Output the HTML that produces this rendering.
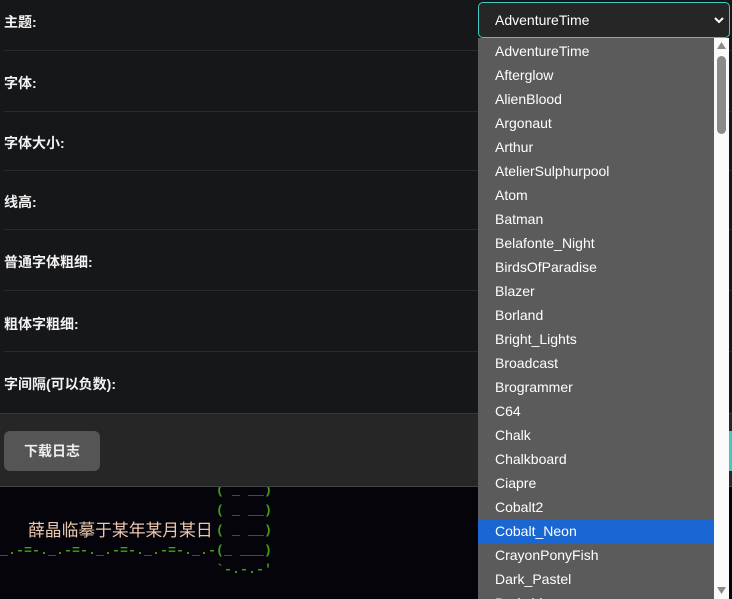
<!DOCTYPE html>
<html><head><meta charset="utf-8"><style>
*{margin:0;padding:0;box-sizing:border-box}
body{width:732px;height:599px;overflow:hidden;background:#161719;font-family:"Liberation Sans","Noto Sans CJK SC",sans-serif;position:relative}
.row{position:absolute;left:4px;width:728px;border-bottom:1px solid #2a2b2d;color:#f2f2f2;font-weight:bold;font-size:14px}
.row span{position:absolute;left:0}
.panel{position:absolute;left:0;top:413px;width:732px;height:74px;background:#262626;border-top:1px solid #3a3a3a;border-bottom:1px solid #444}
.btn{position:absolute;left:4px;top:17px;width:96px;height:40px;background:#555;border-radius:6px;color:#eee;font-weight:bold;font-size:14px;text-align:center;line-height:40px}
.term{position:absolute;left:0;top:487px;width:732px;height:112px;background:#04040a;overflow:hidden}
pre{position:absolute;font-family:"Liberation Mono",monospace;font-size:13.33px;line-height:20px;color:#3fa018;margin:0;white-space:pre;font-weight:bold;transform-origin:0 50%}
.sel{position:absolute;left:478px;top:2px;width:252px;height:36px;background:#262626;border:1px solid #45c8c0;border-radius:5px;color:#fff;font-size:14px;padding:9px 0 0 16px}
.sel svg{position:absolute;right:4px;top:13px}
.dd{position:absolute;left:478px;top:38px;width:251px;height:561px;background:#5b5b5b;overflow:hidden;padding-top:1px}
.dd div{height:24px;line-height:24px;padding-left:17px;color:#fff;font-size:14px;width:236px}
.dd .hl{background:#1a66d2}
.sb{position:absolute;left:714px;top:38px;width:15px;height:561px;background:#fafafa}
.thumb{position:absolute;left:3px;top:18px;width:9px;height:78px;background:#8a8a8a;border-radius:5px}
</style></head><body>
<div class="row" style="top:0;height:51px"><span style="top:12px">主题:</span></div>
<div class="row" style="top:51px;height:61px"><span style="top:22px">字体:</span></div>
<div class="row" style="top:112px;height:59px"><span style="top:21px">字体大小:</span></div>
<div class="row" style="top:171px;height:59px"><span style="top:21px">线高:</span></div>
<div class="row" style="top:230px;height:61px"><span style="top:22px">普通字体粗细:</span></div>
<div class="row" style="top:291px;height:61px"><span style="top:23px">粗体字粗细:</span></div>
<div class="row" style="top:352px;height:61px;border:none"><span style="top:22px">字间隔(可以负数):</span></div>
<div class="panel"><div class="btn">下载日志</div><div style="position:absolute;left:729px;top:17px;width:3px;height:40px;background:#45c8c0"></div></div>
<div class="term">
<pre style="left:216px;top:-5px">( _ __)
( _ __)
( _ __)</pre>
<div style="position:absolute;left:28px;top:32px;color:#ecc8b0;font-family:'Noto Sans CJK SC',sans-serif;font-size:16.8px;line-height:20px;white-space:nowrap">薛晶临摹于某年某月某日</div>
<pre style="left:-24px;top:55px">=-._.-=-._.-=-._.-=-._.-=-._.-(_ ___)</pre>
<pre style="left:216px;top:74px">`-.-.-'</pre>
</div>
<div class="sel">AdventureTime<svg width="12" height="9" viewBox="0 0 12 9"><path d="M2 2l4 4 4-4" stroke="#fff" stroke-width="2" fill="none"/></svg></div>
<div class="dd">
<div>AdventureTime</div><div>Afterglow</div><div>AlienBlood</div><div>Argonaut</div><div>Arthur</div><div>AtelierSulphurpool</div><div>Atom</div><div>Batman</div><div>Belafonte_Night</div><div>BirdsOfParadise</div><div>Blazer</div><div>Borland</div><div>Bright_Lights</div><div>Broadcast</div><div>Brogrammer</div><div>C64</div><div>Chalk</div><div>Chalkboard</div><div>Ciapre</div><div>Cobalt2</div><div class="hl">Cobalt_Neon</div><div>CrayonPonyFish</div><div>Dark_Pastel</div><div>Darkside</div>
</div>
<div class="sb"><div class="thumb"></div>
<svg style="position:absolute;left:3px;top:4px" width="9" height="7"><path d="M0 7L4.5 0 9 7z" fill="#8a8a8a"/></svg>
<svg style="position:absolute;left:3px;top:549px" width="9" height="7"><path d="M0 0L4.5 7 9 0z" fill="#8a8a8a"/></svg></div>
</body></html>
